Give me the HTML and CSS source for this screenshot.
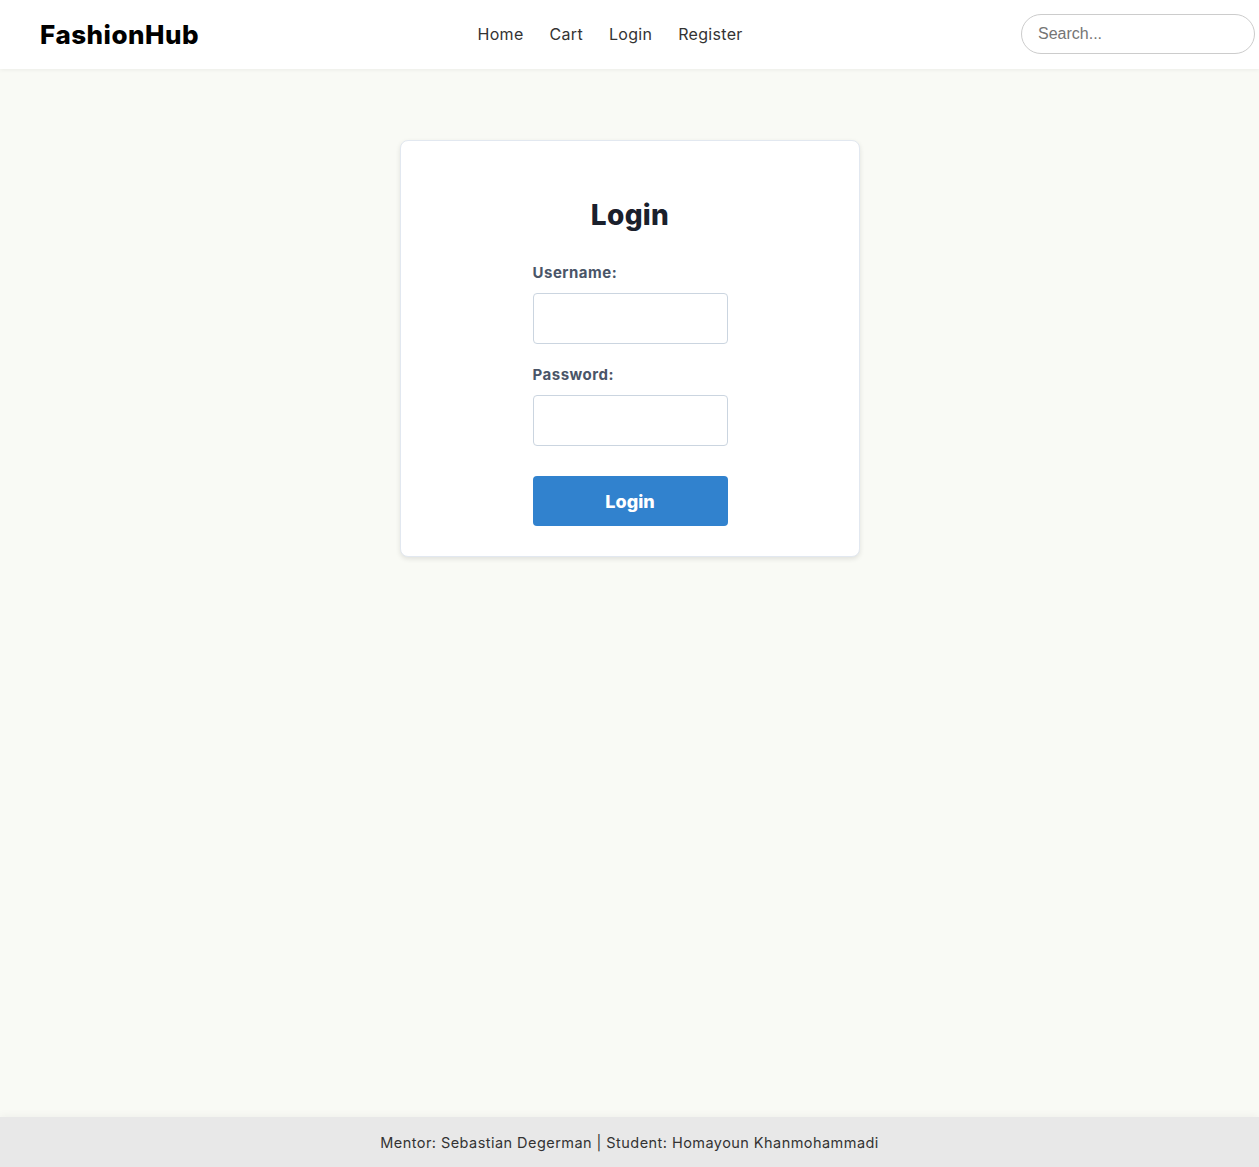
FILE: index.html
```html
<!DOCTYPE html>
<html lang="en">
<head>
<meta charset="utf-8">
<title>FashionHub - Login</title>
<link rel="stylesheet" href="styles.css">
</head>
<body>
<header class="site-header">
  <div class="logo">FashionHub</div>
  <nav class="nav">
    <a href="#">Home</a>
    <a href="#">Cart</a>
    <a href="#">Login</a>
    <a href="#">Register</a>
  </nav>
  <input class="search" type="text" placeholder="Search...">
</header>
<main class="main">
  <section class="card">
    <h2 class="title">Login</h2>
    <form class="form">
      <label class="label" for="u">Username:</label>
      <input class="field" id="u" type="text">
      <label class="label" for="p">Password:</label>
      <input class="field" id="p" type="password">
      <button class="btn" type="button">Login</button>
    </form>
  </section>
</main>
<footer class="footer">Mentor: Sebastian Degerman | Student: Homayoun Khanmohammadi</footer>
</body>
</html>
```
FILE: styles.css
```css
* { box-sizing: border-box; }
html, body { margin: 0; padding: 0; }
body {
  font-family: "Inter", "Open Sans", sans-serif;
  background: #f9faf5;
  color: #333;
  min-height: 100vh;
  display: flex;
  flex-direction: column;
}
.site-header {
  height: 69px;
  background: #fff;
  display: flex;
  align-items: center;
  justify-content: space-between;
  padding: 0 4px 0 40px;
  box-shadow: 0 1px 4px rgba(0,0,0,0.06);
  position: relative;
  z-index: 1;
}
.logo {
  font-size: 26px;
  font-weight: 800;
  color: #000;
  letter-spacing: 0.5px;
}
.nav {
  display: flex;
  gap: 26px;
  margin-top: -1px;
}
.nav a {
  color: #333;
  text-decoration: none;
  font-size: 16px;
  letter-spacing: 0.3px;
}
.search {
  width: 234px;
  height: 40px;
  border: 1px solid #ccc;
  border-radius: 20px;
  padding: 0 16px;
  font-family: "Liberation Sans", Arial, sans-serif;
  font-size: 16px;
  color: #333;
  outline: none;
  margin-top: -2px;
}
.search::placeholder { color: #757575; }
.main {
  flex: 1;
  display: flex;
  justify-content: center;
  align-items: flex-start;
  padding: 71px 0 0 1px;
}
.card {
  width: 460px;
  height: 417px;
  background: #fff;
  border: 1px solid #e2e8f0;
  border-radius: 8px;
  box-shadow: 0 2px 5px rgba(0,0,0,0.1);
  padding: 56px 0 0;
  display: flex;
  flex-direction: column;
  align-items: center;
}
.title {
  margin: 0 0 28px;
  font-size: 28px;
  font-weight: 800;
  color: #1a202c;
  line-height: 36px;
  letter-spacing: 0.3px;
}
.form {
  width: 195px;
  display: flex;
  flex-direction: column;
}
.label {
  font-size: 15px;
  font-weight: 700;
  color: #4a5568;
  line-height: 24px;
  margin-bottom: 8px;
  letter-spacing: 0.5px;
}
.field {
  height: 51px;
  border: 1px solid #cbd5e0;
  border-radius: 4px;
  margin-bottom: 19px;
  font-size: 16px;
  padding: 0 10px;
}
.btn {
  margin-top: 11px;
  height: 50px;
  background: #3182ce;
  color: #fff;
  border: none;
  border-radius: 4px;
  font-family: inherit;
  font-size: 18px;
  font-weight: 800;
}
.footer {
  height: 50px;
  background: #e8e8e8;
  display: flex;
  align-items: center;
  justify-content: center;
  font-size: 14.5px;
  letter-spacing: 0.45px;
  color: #333;
  box-shadow: 0 -2px 8px rgba(0,0,0,0.04);
}
```
